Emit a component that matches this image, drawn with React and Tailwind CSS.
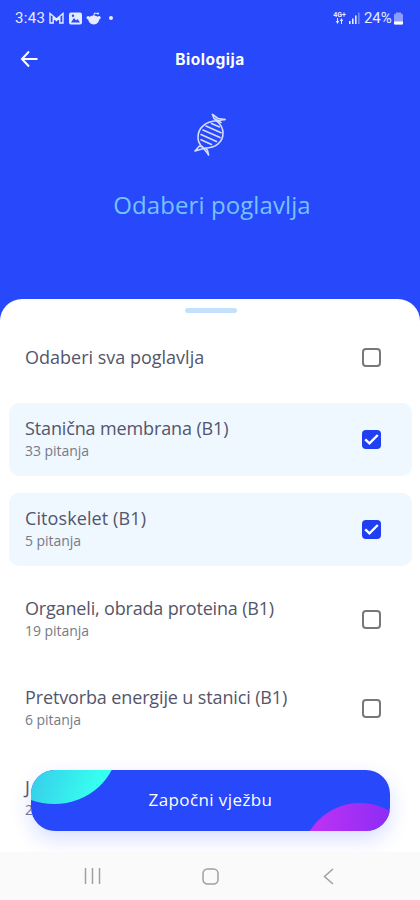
import React, { useState } from "react";

const CHAPTERS = [
  { id: 1, name: "Stanična membrana (B1)", count: "33 pitanja", nameClass: "tracking-[-0.13px]" },
  { id: 2, name: "Citoskelet (B1)", count: "5 pitanja", nameClass: "tracking-[0.1px]" },
  { id: 3, name: "Organeli, obrada proteina (B1)", count: "19 pitanja", nameClass: "tracking-[-0.17px]" },
  { id: 4, name: "Pretvorba energije u stanici (B1)", count: "6 pitanja", nameClass: "tracking-[-0.13px]" },
  { id: 5, name: "Jezgra (B1)", count: "21 pitanje", nameClass: "tracking-[3px]" },
];

const StatusBar = () => (
  <div className="flex h-9 items-center justify-between pl-[15px] pr-[17px] text-[#e6ebff]">
    <div className="flex items-center">
      <span className="w-[31px] whitespace-nowrap text-[15px] tracking-[0.3px] [font-family:Roboto,sans-serif]">3:43</span>
      <svg className="ml-[3px]" width="15" height="12" viewBox="0 0 15 12" fill="none" stroke="currentColor" strokeWidth="1.4">
        <path d="M1 11V1.5L7.5 7 14 1.5V11h-3.2V5.5L7.5 8.5 4.2 5.5V11H1Z" />
      </svg>
      <svg className="ml-[5px]" width="13" height="13" viewBox="0 0 13 13">
        <rect x="0" y="0.5" width="13" height="12" rx="2" fill="currentColor" />
        <path d="M2 10.5 5 6l2 2.5L8.5 7 11 10.5Z" fill="#2748fb" />
        <circle cx="4" cy="3.7" r="1.2" fill="#2748fb" />
      </svg>
      <svg className="ml-1" width="16" height="15" viewBox="0 0 16 15" fill="currentColor">
        <path d="M2 6.5h11.5c0 4-2.2 7-5.8 7S2 10.5 2 6.5Z" />
        <ellipse cx="7.7" cy="8" rx="5" ry="3.5" />
        <circle cx="2.2" cy="6.8" r="1.7" />
        <circle cx="13" cy="6.8" r="1.7" />
        <path d="M7.7 5 8.5 2l3 .6" stroke="currentColor" fill="none" />
        <circle cx="12" cy="2.5" r="1.1" />
      </svg>
      <span className="ml-[7px] size-1 rounded-full bg-[#e6ebff]" />
    </div>
    <div className="flex items-center">
      <div className="flex w-[13px] flex-col items-center">
        <span className="text-[7px] font-bold leading-[6px] [font-family:Roboto,sans-serif]">4G+</span>
        <svg width="9" height="6" viewBox="0 0 9 6" fill="currentColor">
          <path d="M2 0h1v3h1.2L2.5 6 .8 3H2ZM6 6h1V3h1.2L6.5 0 4.8 3H6Z" />
        </svg>
      </div>
      <svg className="ml-[3px]" width="11" height="12" viewBox="0 0 11 12" fill="currentColor">
        <rect x="0" y="9" width="1.6" height="3" />
        <rect x="3" y="6.5" width="1.6" height="5.5" />
        <rect x="6" y="3.5" width="1.6" height="8.5" />
        <rect x="9" y="0.5" width="1.6" height="11.5" opacity="0.4" />
      </svg>
      <span className="ml-1 w-[29px] whitespace-nowrap text-[15px] tracking-[-0.1px] [font-family:Roboto,sans-serif]">24%</span>
      <svg className="ml-px" width="9" height="13" viewBox="0 0 9 13">
        <path d="M0 3Q0 1.5 2 1.5V.5h5v1q2 0 2 1.5v8.5q0 1-1 1H1q-1 0-1-1Z" fill="#8b9dff" />
        <path d="M0 9.5h9v2q0 1-1 1H1q-1 0-1-1Z" fill="#fff" />
      </svg>
    </div>
  </div>
);

const DnaIcon = () => (
  <svg width="32" height="44" viewBox="0 0 32 44" fill="none" stroke="#d5dcff" strokeWidth="1.6" strokeLinecap="round" strokeLinejoin="round">
    {/* strands */}
    <path d="M18.5 1.5 20 5.5 27 9.5M31 6.5 22.5 7.8C12 8.5 4 14.5 4 24.5c0 4 1.5 7 4.5 9.500l6 7.500" />
    <path d="M18.5 1.5 24 5.5 31 6.5M22.5 7.8c4 3 6.500 7.500 6.500 12.500C29 29.500 21 35 11.5 35L1 38M8.5 34l-3-1L1 38M11.5 35l2 2.500 1 4.500" />
    {/* rungs */}
    <path d="M17.5 10.5l8 3.500M12 13l15 6.700M9 17l17 7.600M7 21.500l15.500 7M7 26.800l10.500 4.700" />
  </svg>
);

const Checkbox = ({ checked }) =>
  checked ? (
    <span className="flex size-[19px] items-center justify-center rounded-[4px] bg-[#203ff0]">
      <svg width="15" height="13" viewBox="0 0 15 13" fill="none" stroke="#fff" strokeWidth="2.4">
        <path d="M1.2 6.3 5.5 10.3 13.8 2" />
      </svg>
    </span>
  ) : (
    <span className="size-[19px] rounded-[4px] border-2 border-[#77777c]" />
  );

const ChapterRow = ({ chapter, checked, onToggle }) => (
  <div
    onClick={onToggle}
    className={`flex h-[73px] shrink-0 cursor-pointer items-center justify-between rounded-[10px] pl-4 pr-[31px] ${
      checked ? "bg-[#eff7ff]" : ""
    }`}
  >
    <div className="whitespace-nowrap pb-px text-[#53566a] [font-family:'Open_Sans',sans-serif]">
      <p className={`text-[18px] leading-6 ${chapter.nameClass}`}>{chapter.name}</p>
      <p className="text-[14px] leading-[22px] tracking-[-0.05px] text-[#777a84]">{chapter.count}</p>
    </div>
    <Checkbox checked={checked} />
  </div>
);

const NavigationBar = () => (
  <div className="flex h-12 items-center justify-between bg-[#fafafa] pl-[84px] pr-[86px] text-[#a0a0a0]">
    <svg width="17" height="16" viewBox="0 0 17 16" stroke="currentColor" strokeWidth="1.5">
      <path d="M1.5 0v16M8.5 0v16M15.5 0v16" />
    </svg>
    <svg className="mr-1" width="17" height="17" viewBox="0 0 17 17" fill="none" stroke="currentColor" strokeWidth="1.5">
      <rect x="1" y="1" width="15" height="15" rx="4.5" />
    </svg>
    <svg width="11" height="17" viewBox="0 0 11 17" fill="none" stroke="currentColor" strokeWidth="1.5">
      <path d="M10 1 1.5 8.5 10 16" />
    </svg>
  </div>
);

export default function App() {
  const [selected, setSelected] = useState([1, 2]);
  const allSelected = selected.length === CHAPTERS.length;

  const toggle = (id) => {
    setSelected((prev) => (prev.includes(id) ? prev.filter((x) => x !== id) : [...prev, id]));
  };

  return (
    <div className="flex h-[900px] w-[420px] flex-col overflow-hidden bg-[#2748fb]">
      {/* header */}
      <header className="h-[299px] shrink-0">
        <StatusBar />
        <div className="grid h-[45px] grid-cols-[60px_1fr_60px] items-center">
          <svg className="ml-5" width="19" height="18" viewBox="0 0 19 18" fill="none" stroke="#fff" strokeWidth="2">
            <path d="M9 1.5 2 9l7 7.5M2 9h15.5" />
          </svg>
          <h1 className="whitespace-nowrap pt-0.5 text-center text-[15.5px] font-bold tracking-[0.5px] text-white [font-family:Inter,sans-serif]">
            Biologija
          </h1>
        </div>
        <div className="flex flex-col items-center pt-8">
          <DnaIcon />
          <h2 className="mt-8 whitespace-nowrap pl-1 text-[24px] leading-8 tracking-[0.1px] text-[#73c3ff] [font-family:'Open_Sans',sans-serif]">
            Odaberi poglavlja
          </h2>
        </div>
      </header>

      {/* chapter sheet */}
      <main className="relative flex h-[553px] shrink-0 flex-col overflow-hidden rounded-t-[22px] bg-white pl-[9px] pr-2">
        <div className="mx-auto mt-[9px] h-[5px] w-[52px] shrink-0 rounded-full bg-[#c4e1fb]" />
        <div
          onClick={() => setSelected(allSelected ? [] : CHAPTERS.map((c) => c.id))}
          className="mb-[9px] mt-2 flex h-[73px] shrink-0 cursor-pointer items-center justify-between pl-4 pr-[31px]"
        >
          <span className="whitespace-nowrap text-[18px] text-[#53566a] [font-family:'Open_Sans',sans-serif]">Odaberi sva poglavlja</span>
          <Checkbox checked={allSelected} />
        </div>
        <div className="flex flex-col gap-[16.8px]">
          {CHAPTERS.map((chapter) => (
            <ChapterRow key={chapter.id} chapter={chapter} checked={selected.includes(chapter.id)} onToggle={() => toggle(chapter.id)} />
          ))}
        </div>

        {/* floating start button */}
        <button className="absolute bottom-[21px] left-[31px] h-[61px] w-[359px] rounded-[24px] bg-[#2748fb] shadow-[0_8px_20px_rgba(39,72,251,0.18)]">
          <svg className="absolute inset-0 rounded-[24px]" width="359" height="61" viewBox="0 0 359 61">
            <defs>
              <linearGradient id="cyan" x1="0" y1="0" x2="1" y2="0.3">
                <stop offset="0.3" stopColor="#36b9e8" />
                <stop offset="1" stopColor="#36fff0" />
              </linearGradient>
              <linearGradient id="violet" x1="0" y1="0" x2="1" y2="0">
                <stop offset="0.1" stopColor="#bd32f5" />
                <stop offset="0.8" stopColor="#8a2cf4" />
              </linearGradient>
            </defs>
            <ellipse cx="23" cy="-26" rx="64" ry="60" fill="url(#cyan)" />
            <circle cx="329" cy="92" r="59" fill="url(#violet)" />
          </svg>
          <span className="relative bottom-px whitespace-nowrap text-[17px] tracking-[0.4px] text-white [font-family:'Open_Sans',sans-serif]">
            Započni vježbu
          </span>
        </button>
      </main>

      <NavigationBar />
    </div>
  );
}
